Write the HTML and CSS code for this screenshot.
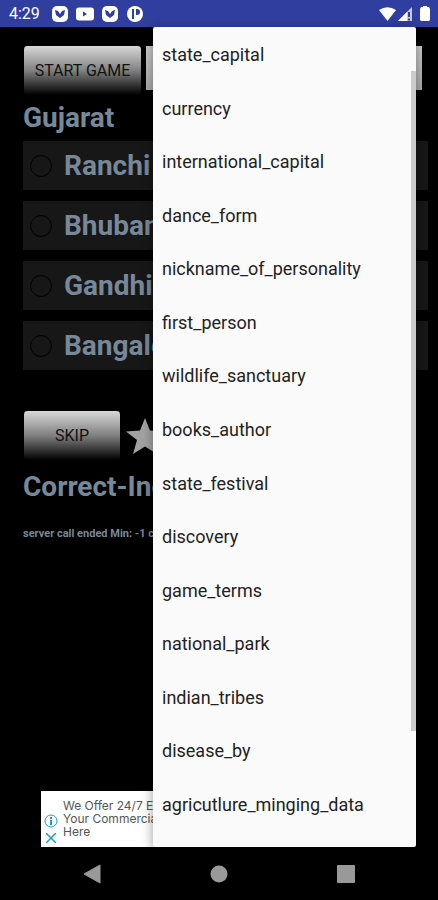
FILE: index.html
```html
<!DOCTYPE html>
<html lang="en">
<head>
<meta charset="utf-8">
<meta name="viewport" content="width=device-width, initial-scale=1">
<title>Quiz</title>
<link rel="stylesheet" href="styles.css">
</head>
<body>
<header class="status">
  <span class="clock">4:29</span>
  <svg class="note" viewBox="0 0 18 18" aria-hidden="true"><rect x="1" y="1" width="16" height="16" rx="5" fill="#fff"/><path d="M4 5l3 1 2 3 2-3 3-1-1 5-4 3-4-3z" fill="#303f9f"/></svg>
  <svg class="note" viewBox="0 0 18 18" aria-hidden="true"><rect x="0" y="2.500" width="18" height="13" rx="3" fill="#fff"/><path d="M7 6.500l4 2.500-4 2.500z" fill="#303f9f"/></svg>
  <svg class="note" viewBox="0 0 18 18" aria-hidden="true"><rect x="1" y="1" width="16" height="16" rx="5" fill="#fff"/><path d="M4 5l3 1 2 3 2-3 3-1-1 5-4 3-4-3z" fill="#303f9f"/></svg>
  <svg class="note" viewBox="0 0 18 18" aria-hidden="true"><circle cx="9" cy="9" r="8" fill="#fff"/><path d="M6 4h2v10H6zM10 4h1a3 3 0 0 1 0 6h-1z" fill="#303f9f"/></svg>
  <span class="system">
    <svg width="17" height="16" viewBox="0 0 17 16" aria-hidden="true"><path d="M0 4Q8.500-1.500 17 4L8.500 15z" fill="#fff"/></svg>
    <svg width="15" height="16" viewBox="0 0 15 16" aria-hidden="true"><path d="M0 15L14 1v14z" fill="#c5cae9"/><path d="M0 15l9-9v9z" fill="#fff"/><path d="M11 6v5M11 12.500v2" stroke="#303f9f" stroke-width="2"/></svg>
    <svg class="battery" width="10" height="16" viewBox="0 0 10 16" aria-hidden="true"><path d="M3 0h4v1h2l1 2v11l-1 1H1l-1-1V3l1-2h2z" fill="#fff"/></svg>
  </span>
</header>
<main class="screen">
  <div class="toolbar">
    <button class="btn" type="button">START GAME</button>
    <select class="topic" aria-label="Topic"><option>state_capital</option></select>
  </div>
  <h1 class="heading">Gujarat</h1>
  <div class="answers">
    <label class="answer"><input type="radio" name="answer">Ranchi</label>
    <label class="answer"><input type="radio" name="answer">Bhubaneswar</label>
    <label class="answer"><input type="radio" name="answer">Gandhinagar</label>
    <label class="answer"><input type="radio" name="answer">Bangalore</label>
  </div>
  <div class="actions">
    <button class="btn skip" type="button">SKIP</button>
    <svg width="38" height="36" viewBox="0 0 38 36" aria-hidden="true"><path d="M19 0l5 12.500 14 1-11 8.500 4 14-12-7.500L7 36l4-14L0 13.500l14-1z" fill="#a2a2a2"/></svg>
  </div>
  <h2 class="heading score">Correct-Incorrect</h2>
  <p class="log">server call ended Min: -1 c</p>
  <aside class="ad">
    <div class="ad-icons">
      <svg width="14" height="14" viewBox="0 0 14 14" fill="none" stroke="#16a0cc" aria-hidden="true"><circle cx="7" cy="7" r="6"/><path d="M7 6v5M7 3v2" stroke-width="2"/></svg>
      <svg width="10" height="10" viewBox="0 0 10 10" stroke="#16a0cc" stroke-width="1.500" aria-hidden="true"><path d="M0 0l10 10M10 0L0 10"/></svg>
    </div>
    <p class="ad-text">We Offer 24/7 E<br>Your Commercial<br>Here</p>
  </aside>
  <div class="menu" role="listbox" aria-label="Topics">
    <button type="button" role="option">state_capital</button>
    <button type="button" role="option">currency</button>
    <button type="button" role="option">international_capital</button>
    <button type="button" role="option">dance_form</button>
    <button type="button" role="option">nickname_of_personality</button>
    <button type="button" role="option">first_person</button>
    <button type="button" role="option">wildlife_sanctuary</button>
    <button type="button" role="option">books_author</button>
    <button type="button" role="option">state_festival</button>
    <button type="button" role="option">discovery</button>
    <button type="button" role="option">game_terms</button>
    <button type="button" role="option">national_park</button>
    <button type="button" role="option">indian_tribes</button>
    <button type="button" role="option">disease_by</button>
    <button type="button" role="option">agricutlure_minging_data</button>
    <span class="scrollbar"></span>
  </div>
</main>
<nav class="navbar">
  <button type="button" aria-label="Back"><svg width="18" height="20" viewBox="0 0 18 20"><path d="M17 1v18L1 10z" fill="#999" stroke="#999" stroke-linejoin="round"/></svg></button>
  <button type="button" aria-label="Home"><svg width="18" height="18" viewBox="0 0 18 18"><circle cx="9" cy="9" r="8.500" fill="#999"/></svg></button>
  <button type="button" aria-label="Recent apps"><svg width="18" height="18" viewBox="0 0 18 18"><rect width="18" height="18" rx="1" fill="#999"/></svg></button>
</nav>
</body>
</html>
```
FILE: styles.css
```css
* {
  box-sizing: border-box;
}

body {
  margin: 0;
  min-height: 100vh;
  display: flex;
  flex-direction: column;
  background: #000;
  color: #778899;
  font-family: Roboto, sans-serif;
}

button {
  margin: 0;
  padding: 0;
  border: 0;
  background: none;
  font-family: inherit;
}

.status {
  display: flex;
  align-items: center;
  gap: 7px;
  height: 27px;
  padding: 0 8px 0 9px;
  background: #303f9f;
  color: #fff;
}

.clock {
  margin-right: 4px;
  font-size: 16px;
}

.note {
  width: 18px;
  height: 18px;
}

.system {
  display: flex;
  gap: 2px;
  margin-left: auto;
}

.battery {
  margin-left: 5px;
}

.screen {
  position: relative;
  flex: 1;
  display: flex;
  flex-direction: column;
  padding: 18px 10px 0 23px;
}

.toolbar {
  display: flex;
  align-items: center;
  gap: 4px;
  padding-right: 6px;
}

.btn {
  flex: none;
  width: 119px;
  height: 51px;
  border: 1px solid #000;
  border-radius: 4px;
  background: linear-gradient(#d8d8d8, #808080 50%, #000);
  color: #111;
  font-size: 16px;
}

.btn.skip {
  width: 98px;
}

.topic {
  flex: 1;
  min-width: 0;
  height: 44px;
  margin-bottom: 5px;
  padding: 0 16px;
  border: 0;
  border-radius: 0;
  appearance: none;
  background: linear-gradient(#ccc, #aaa);
}

.heading {
  margin: 4px 0 0;
  font-size: 28px;
  line-height: 36px;
  font-weight: 700;
  white-space: nowrap;
}

.heading.score {
  margin-top: 8px;
}

.answers {
  display: flex;
  flex-direction: column;
  gap: 11px;
  margin-top: 5px;
}

.answer {
  display: flex;
  align-items: center;
  gap: 12px;
  height: 49px;
  padding: 0 7px;
  background: #171717;
  font-size: 28px;
  font-weight: 700;
}

.answer input {
  width: 22px;
  height: 22px;
  margin: 0;
  border: 1px solid #000;
  border-radius: 50%;
  appearance: none;
}

.actions {
  display: flex;
  align-items: center;
  gap: 5px;
  margin-top: 40px;
}

.log {
  margin: 19px 0 0;
  font-size: 11px;
  line-height: 20px;
  font-weight: 700;
  white-space: nowrap;
}

.ad {
  display: flex;
  gap: 5px;
  width: 320px;
  height: 56px;
  margin: auto 0 0 18px;
  padding: 8px 3px 0;
  background: #fff;
  color: #555;
}

.ad-icons {
  display: flex;
  flex-direction: column;
  align-items: center;
  gap: 5px;
  padding-top: 15px;
}

.ad-text {
  margin: 0;
  font-family: Inter, sans-serif;
  font-size: 12px;
  line-height: 13px;
  white-space: nowrap;
}

.menu {
  position: absolute;
  top: 0;
  right: 22px;
  bottom: 0;
  left: 153px;
  display: flex;
  flex-direction: column;
  padding: 1px 0 16px;
  border-radius: 2px;
  background: #fafafa;
  box-shadow: 0 2px 12px rgba(0, 0, 0, 0.4);
}

.menu button {
  flex: 1;
  padding: 0 9px;
  color: #222;
  font-size: 18px;
  text-align: left;
}

.scrollbar {
  position: absolute;
  top: 44px;
  right: 0;
  width: 5px;
  height: 660px;
  background: #ccc;
}

.navbar {
  display: flex;
  align-items: center;
  justify-content: center;
  height: 53px;
}

.navbar button {
  display: flex;
  justify-content: center;
  width: 127px;
}
```
